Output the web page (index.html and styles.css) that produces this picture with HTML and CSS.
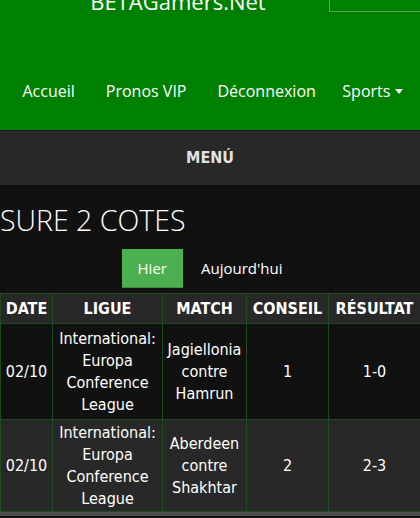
FILE: index.html
```html
<!DOCTYPE html>
<html lang="fr">
<head>
<meta charset="utf-8">
<title>BETAGamers.Net</title>
<link rel="stylesheet" href="styles.css">
</head>
<body>
<header class="site-header">
  <div class="brand">BETAGamers.Net</div>
  <div class="search-box"></div>
  <nav class="nav">
    <a class="nav-link" href="#">Accueil</a>
    <a class="nav-link" href="#">Pronos VIP</a>
    <a class="nav-link" href="#">Déconnexion</a>
    <a class="nav-link nav-drop" href="#">Sports <span class="caret"></span></a>
  </nav>
</header>
<div class="menu-bar">MENÚ</div>
<main class="content">
  <h1 class="page-title">SURE 2 COTES</h1>
  <div class="tabs">
    <a class="tab tab-active" href="#">Hier</a>
    <a class="tab" href="#">Aujourd'hui</a>
  </div>
  <table class="tips">
    <colgroup>
      <col class="c-date"><col class="c-league"><col class="c-match"><col class="c-tip"><col class="c-res">
    </colgroup>
    <thead>
      <tr><th>DATE</th><th>LIGUE</th><th>MATCH</th><th>CONSEIL</th><th>RÉSULTAT</th></tr>
    </thead>
    <tbody>
      <tr class="row-odd">
        <td>02/10</td><td>International: Europa Conference League</td><td>Jagiellonia contre Hamrun</td><td>1</td><td>1-0</td>
      </tr>
      <tr class="row-even">
        <td>02/10</td><td>International: Europa Conference League</td><td>Aberdeen contre Shakhtar</td><td>2</td><td>2-3</td>
      </tr>
    </tbody>
  </table>
  <div class="scroll-strip"></div>
</main>
</body>
</html>
```
FILE: styles.css
```css
html, body {
  margin: 0;
  padding: 0;
  background: #111111;
  color: #ffffff;
  font-family: "Open Sans", "DejaVu Sans", sans-serif;
  overflow: hidden;
}

.site-header {
  position: relative;
  background: #008000;
  height: 130px;
  overflow: hidden;
}

.brand {
  text-align: center;
  width: 356px;
  font-size: 22px;
  line-height: 30px;
  margin-top: -14px;
  color: #ffffff;
}

.search-box {
  position: absolute;
  top: -2px;
  left: 329px;
  width: 100px;
  height: 12px;
  border: 1px solid #5aa35a;
}

.nav {
  display: flex;
  padding: 62px 0 0 7px;
}

.nav-link {
  color: #ffffff;
  text-decoration: none;
  font-size: 16px;
  line-height: 26px;
  padding: 0 15.5px;
  display: flex;
  align-items: center;
  gap: 5px;
}

.nav-drop {
  padding-left: 11px;
}

.caret {
  width: 0;
  height: 0;
  border-left: 4px solid transparent;
  border-right: 4px solid transparent;
  border-top: 5px solid #ffffff;
  margin-top: 1px;
}

.menu-bar {
  background: #282828;
  border-top: 1px solid #1c1c1c;
  height: 54px;
  line-height: 54px;
  text-align: center;
  font-family: "DejaVu Sans Condensed", "DejaVu Sans", sans-serif;
  font-weight: bold;
  font-size: 16px;
  color: #e2e2e2;
}

.content {
  background: #111111;
}

.page-title {
  margin: 0;
  padding-top: 16px;
  font-weight: 300;
  font-size: 28.5px;
  line-height: 38px;
  font-family: "Open Sans", sans-serif;
}

.tabs {
  display: flex;
  justify-content: center;
  padding-top: 10px;
  gap: 2px;
}

.tab {
  color: #ffffff;
  text-decoration: none;
  font-size: 15px;
  padding: 0 16px;
  height: 38px;
  line-height: 38px;
}

.tab-active {
  background: #4caf50;
  border-bottom: 1px solid #3d8b40;
}

.tips {
  margin-top: 5px;
  width: 420px;
  border-collapse: collapse;
  table-layout: fixed;
  font-family: "DejaVu Sans Condensed", "DejaVu Sans", sans-serif;
  font-size: 16px;
  color: #ffffff;
}

.c-date { width: 52px; }
.c-league { width: 110px; }
.c-match { width: 84px; }
.c-tip { width: 82px; }
.c-res { width: 92px; }

.tips th,
.tips td {
  border: 1px solid #214a21;
  text-align: center;
  padding: 0 1px;
}

.tips th {
  background: #282828;
  height: 29px;
  font-weight: bold;
  font-size: 16px;
}

.tips td {
  line-height: 22px;
  height: 95px;
}

.row-odd td { background: #111111; }
.row-even td { background: #282828; height: 91px; }

.scroll-strip {
  height: 4px;
  background: #4d4d4d;
}
```
